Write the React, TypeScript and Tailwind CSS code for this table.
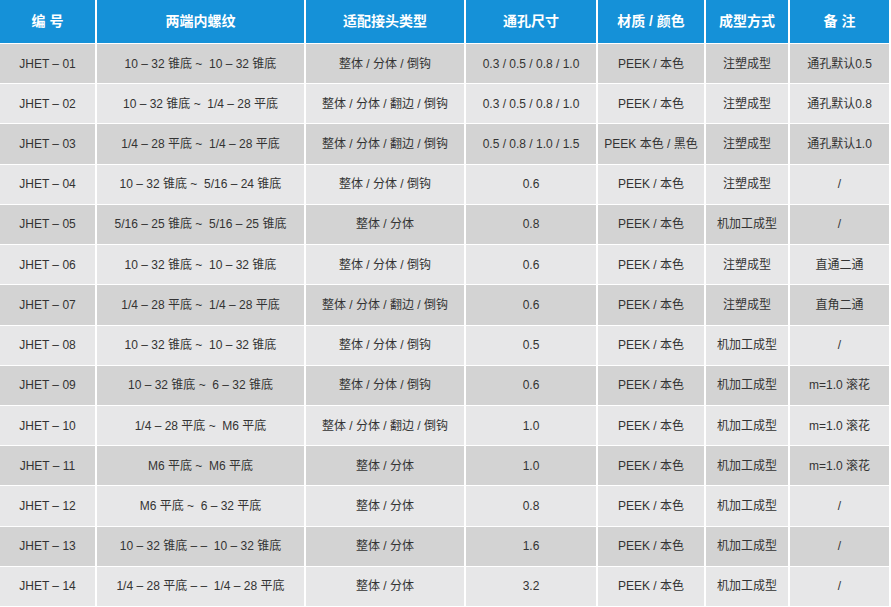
import React from 'react';

const headers = ['编 号', '两端内螺纹', '适配接头类型', '通孔尺寸', '材质 / 颜色', '成型方式', '备 注'];

const rows: string[][] = [
  ['JHET – 01', '10 – 32 锥底 ~  10 – 32 锥底', '整体 / 分体 / 倒钩', '0.3 / 0.5 / 0.8 / 1.0', 'PEEK / 本色', '注塑成型', '通孔默认0.5'],
  ['JHET – 02', '10 – 32 锥底 ~  1/4 – 28 平底', '整体 / 分体 / 翻边 / 倒钩', '0.3 / 0.5 / 0.8 / 1.0', 'PEEK / 本色', '注塑成型', '通孔默认0.8'],
  ['JHET – 03', '1/4 – 28 平底 ~  1/4 – 28 平底', '整体 / 分体 / 翻边 / 倒钩', '0.5 / 0.8 / 1.0 / 1.5', 'PEEK 本色 / 黑色', '注塑成型', '通孔默认1.0'],
  ['JHET – 04', '10 – 32 锥底 ~  5/16 – 24 锥底', '整体 / 分体 / 倒钩', '0.6', 'PEEK / 本色', '注塑成型', '/'],
  ['JHET – 05', '5/16 – 25 锥底 ~  5/16 – 25 锥底', '整体 / 分体', '0.8', 'PEEK / 本色', '机加工成型', '/'],
  ['JHET – 06', '10 – 32 锥底 ~  10 – 32 锥底', '整体 / 分体 / 倒钩', '0.6', 'PEEK / 本色', '注塑成型', '直通二通'],
  ['JHET – 07', '1/4 – 28 平底 ~  1/4 – 28 平底', '整体 / 分体 / 翻边 / 倒钩', '0.6', 'PEEK / 本色', '注塑成型', '直角二通'],
  ['JHET – 08', '10 – 32 锥底 ~  10 – 32 锥底', '整体 / 分体 / 倒钩', '0.5', 'PEEK / 本色', '机加工成型', '/'],
  ['JHET – 09', '10 – 32 锥底 ~  6 – 32 锥底', '整体 / 分体 / 倒钩', '0.6', 'PEEK / 本色', '机加工成型', 'm=1.0 滚花'],
  ['JHET – 10', '1/4 – 28 平底 ~  M6 平底', '整体 / 分体 / 翻边 / 倒钩', '1.0', 'PEEK / 本色', '机加工成型', 'm=1.0 滚花'],
  ['JHET – 11', 'M6 平底 ~  M6 平底', '整体 / 分体', '1.0', 'PEEK / 本色', '机加工成型', 'm=1.0 滚花'],
  ['JHET – 12', 'M6 平底 ~  6 – 32 平底', '整体 / 分体', '0.8', 'PEEK / 本色', '机加工成型', '/'],
  ['JHET – 13', '10 – 32 锥底 – –  10 – 32 锥底', '整体 / 分体', '1.6', 'PEEK / 本色', '机加工成型', '/'],
  ['JHET – 14', '1/4 – 28 平底 – –  1/4 – 28 平底', '整体 / 分体', '3.2', 'PEEK / 本色', '机加工成型', '/'],
];

export default function App() {
  return (
    <div className="w-[891px] h-[607px] bg-white" style={{ fontFamily: '"Liberation Sans", "Noto Sans CJK SC", sans-serif' }}>
      <div className="grid h-[606px] grid-cols-[95px_207px_158px_130px_106px_82px_99px] grid-rows-[43px_repeat(14,minmax(0,1fr))] gap-x-[2px] gap-y-px">
        {headers.map((h) => (
          <div key={h} className="flex items-center justify-center bg-[#1591d8] text-[14px] font-bold text-white whitespace-pre">
            {h}
          </div>
        ))}
        {rows.map((r, i) =>
          r.map((c, j) => (
            <div
              key={`${i}-${j}`}
              className={`flex items-center justify-center text-[12px] text-[#333333] whitespace-pre ${
                i % 2 === 0 ? 'bg-[#d3d3d3]' : 'bg-[#e7e7e8]'
              }`}
            >
              {c}
            </div>
          ))
        )}
      </div>
    </div>
  );
}
